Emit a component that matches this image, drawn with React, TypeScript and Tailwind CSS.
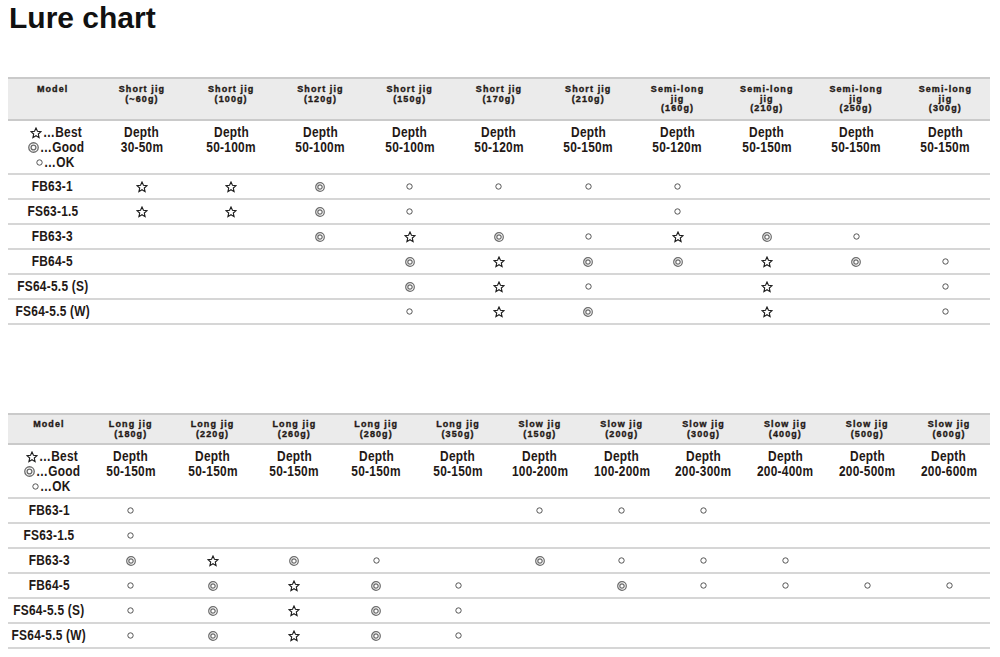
import React from "react";

type Sym = "S" | "D" | "O" | "";

const Star = ({ size = 12 }: { size?: number }) => (
  <svg width={size} height={size} viewBox="0 0 24 24" className="block">
    <polygon
      points="12,2 14.9,8.6 22,9.3 16.6,14 18.2,21.2 12,17.4 5.8,21.2 7.4,14 2,9.3 9.1,8.6"
      fill="none"
      stroke="#1a1a1a"
      strokeWidth="2.2"
      strokeLinejoin="miter"
    />
  </svg>
);

const Double = ({ size = 10 }: { size?: number }) => (
  <svg width={size} height={size} viewBox="0 0 10 10" className="block">
    <circle cx="5" cy="5" r="4.3" fill="none" stroke="#6b6b6b" strokeWidth="1.2" />
    <circle cx="5" cy="5" r="2.2" fill="none" stroke="#6b6b6b" strokeWidth="1.2" />
  </svg>
);

const Ring = ({ size = 7 }: { size?: number }) => (
  <svg width={size} height={size} viewBox="0 0 7 7" className="block">
    <circle cx="3.5" cy="3.5" r="2.7" fill="none" stroke="#555" strokeWidth="1" />
  </svg>
);

const SymIcon = ({ s }: { s: Sym }) => {
  if (s === "S") return <Star />;
  if (s === "D") return <Double />;
  if (s === "O") return <Ring />;
  return null;
};

const N = ({ children }: { children: React.ReactNode }) => (
  <span className="inline-block whitespace-nowrap scale-x-[0.85] tracking-[0.3px]">{children}</span>
);

type Col = { head: string[]; depth: string };
type Row = { model: string; cells: Sym[] };

const legendText =
  "inline-block whitespace-nowrap origin-left scale-x-[0.85] tracking-[0.3px] ml-[1px]";

const Legend = () => (
  <div className="flex flex-col items-center pt-[4px] pl-[6px] text-[14px] leading-[15px]">
    <div className="flex items-center">
      <Star size={12} />
      <span className={`${legendText} -mr-[7px]`}>…Best</span>
    </div>
    <div className="flex items-center">
      <Double size={11} />
      <span className={`${legendText} -mr-[8px]`}>…Good</span>
    </div>
    <div className="flex items-center">
      <Ring size={7} />
      <span className={`${legendText} -mr-[5px]`}>…OK</span>
    </div>
  </div>
);

const headCls =
  "text-center font-bold text-[9px] leading-[9.5px] tracking-[1.1px] whitespace-nowrap [-webkit-text-stroke:0.35px_#231815]";

const Chart = ({
  cols,
  rows,
  headH,
  headPt,
  gridClass,
}: {
  cols: Col[];
  rows: Row[];
  headH: string;
  headPt: string;
  gridClass: string;
}) => (
  <div className="mx-[8px] w-[982px] text-[#231815] font-['Liberation_Sans',Arial,sans-serif] font-bold">
    <div className={`grid ${gridClass} ${headH} bg-[#ebebeb] border-t-2 border-b-2 border-[#cacaca]`}>
      <div className={`${headPt} ${headCls}`}>Model</div>
      {cols.map((c, i) => (
        <div key={i} className={`${headPt} ${headCls}`}>
          {c.head.map((h, j) => (
            <div key={j}>{h}</div>
          ))}
        </div>
      ))}
    </div>
    <div className={`grid ${gridClass} h-[54px] border-b-2 border-[#d6d6d6]`}>
      <Legend />
      {cols.map((c, i) => (
        <div key={i} className="pt-[4px] text-center text-[14px] leading-[15px]">
          <div>
            <N>Depth</N>
          </div>
          <div>
            <N>{c.depth}</N>
          </div>
        </div>
      ))}
    </div>
    {rows.map((r, i) => (
      <div key={i} className={`grid ${gridClass} h-[25px] border-b-2 border-[#d6d6d6]`}>
        <div className="flex items-center justify-center text-[14px]">
          <N>{r.model}</N>
        </div>
        {r.cells.map((s, j) => (
          <div key={j} className="flex items-center justify-center">
            <SymIcon s={s} />
          </div>
        ))}
      </div>
    ))}
  </div>
);

const cols1: Col[] = [
  { head: ["Short jig", "(~60g)"], depth: "30-50m" },
  { head: ["Short jig", "(100g)"], depth: "50-100m" },
  { head: ["Short jig", "(120g)"], depth: "50-100m" },
  { head: ["Short jig", "(150g)"], depth: "50-100m" },
  { head: ["Short jig", "(170g)"], depth: "50-120m" },
  { head: ["Short jig", "(210g)"], depth: "50-150m" },
  { head: ["Semi-long", "jig", "(160g)"], depth: "50-120m" },
  { head: ["Semi-long", "jig", "(210g)"], depth: "50-150m" },
  { head: ["Semi-long", "jig", "(250g)"], depth: "50-150m" },
  { head: ["Semi-long", "jig", "(300g)"], depth: "50-150m" },
];

const rows1: Row[] = [
  { model: "FB63-1", cells: ["S", "S", "D", "O", "O", "O", "O", "", "", ""] },
  { model: "FS63-1.5", cells: ["S", "S", "D", "O", "", "", "O", "", "", ""] },
  { model: "FB63-3", cells: ["", "", "D", "S", "D", "O", "S", "D", "O", ""] },
  { model: "FB64-5", cells: ["", "", "", "D", "S", "D", "D", "S", "D", "O"] },
  { model: "FS64-5.5 (S)", cells: ["", "", "", "D", "S", "O", "", "S", "", "O"] },
  { model: "FS64-5.5 (W)", cells: ["", "", "", "O", "S", "D", "", "S", "", "O"] },
];

const cols2: Col[] = [
  { head: ["Long jig", "(180g)"], depth: "50-150m" },
  { head: ["Long jig", "(220g)"], depth: "50-150m" },
  { head: ["Long jig", "(260g)"], depth: "50-150m" },
  { head: ["Long jig", "(280g)"], depth: "50-150m" },
  { head: ["Long jig", "(350g)"], depth: "50-150m" },
  { head: ["Slow jig", "(150g)"], depth: "100-200m" },
  { head: ["Slow jig", "(200g)"], depth: "100-200m" },
  { head: ["Slow jig", "(300g)"], depth: "200-300m" },
  { head: ["Slow jig", "(400g)"], depth: "200-400m" },
  { head: ["Slow jig", "(500g)"], depth: "200-500m" },
  { head: ["Slow jig", "(600g)"], depth: "200-600m" },
];

const rows2: Row[] = [
  { model: "FB63-1", cells: ["O", "", "", "", "", "O", "O", "O", "", "", ""] },
  { model: "FS63-1.5", cells: ["O", "", "", "", "", "", "", "", "", "", ""] },
  { model: "FB63-3", cells: ["D", "S", "D", "O", "", "D", "O", "O", "O", "", ""] },
  { model: "FB64-5", cells: ["O", "D", "S", "D", "O", "", "D", "O", "O", "O", "O"] },
  { model: "FS64-5.5 (S)", cells: ["O", "D", "S", "D", "O", "", "", "", "", "", ""] },
  { model: "FS64-5.5 (W)", cells: ["O", "D", "S", "D", "O", "", "", "", "", "", ""] },
];

export default function App() {
  return (
    <div className="w-[1000px] h-[657px] overflow-hidden bg-white">
      <h1 className="pt-[3px] pl-[9px] text-[30px] leading-[30px] font-bold text-[#111] font-['Liberation_Sans',Arial,sans-serif]">
        Lure chart
      </h1>
      <div className="mt-[44px]">
        <Chart cols={cols1} rows={rows1} headH="h-[44px]" headPt="pt-[6px]" gridClass="grid-cols-11" />
      </div>
      <div className="mt-[88px]">
        <Chart cols={cols2} rows={rows2} headH="h-[32px]" headPt="pt-[5px]" gridClass="grid-cols-12" />
      </div>
    </div>
  );
}
